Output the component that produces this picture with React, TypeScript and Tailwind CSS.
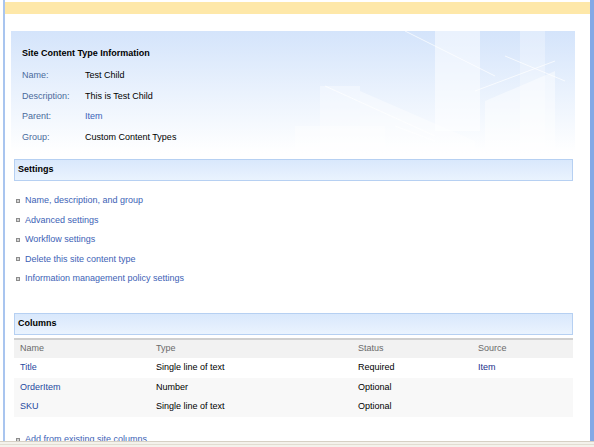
import React from 'react';

const font = { fontFamily: '"Liberation Sans", Arial, sans-serif' };

const info = [
  { label: 'Name:', value: 'Test Child' },
  { label: 'Description:', value: 'This is Test Child' },
  { label: 'Parent:', value: 'Item', link: true },
  { label: 'Group:', value: 'Custom Content Types' },
];

const settings = [
  'Name, description, and group',
  'Advanced settings',
  'Workflow settings',
  'Delete this site content type',
  'Information management policy settings',
];

const columns = [
  { name: 'Title', type: 'Single line of text', status: 'Required', source: 'Item', bg: 'bg-white' },
  { name: 'OrderItem', type: 'Number', status: 'Optional', source: '', bg: 'bg-[#f8f8f8]' },
  { name: 'SKU', type: 'Single line of text', status: 'Optional', source: '', bg: 'bg-[#f8f8f8]' },
];

function Bullet() {
  return <span className="inline-block w-[4px] h-[4px] border border-[#8c8c8c] bg-[#d4d4d4] mr-[5px] shrink-0" />;
}

function SectionBar({ title }: { title: string }) {
  return (
    <div className="ml-[9px] w-[559px] h-[22px] border border-[#b6d0f2] bg-gradient-to-b from-[#d9e8fc] to-[#eaf3fe] flex items-center pl-[3px]">
      <span className="text-[9px] font-bold text-black">{title}</span>
    </div>
  );
}

function Buildings() {
  return (
    <svg className="absolute right-0 top-0" width="300" height="120" viewBox="0 0 300 120">
      <g fill="#ffffff" fillOpacity="0.35">
        <rect x="45" y="55" width="40" height="65" />
        <rect x="160" y="0" width="45" height="100" fillOpacity="0.5" />
        <rect x="245" y="0" width="25" height="120" fillOpacity="0.3" />
        <polygon points="85,60 200,110 200,120 85,120" fillOpacity="0.4" />
        <polygon points="210,70 280,40 280,120 210,120" fillOpacity="0.45" />
        <rect x="20" y="95" width="90" height="25" fillOpacity="0.4" />
      </g>
      <g stroke="#ffffff" strokeOpacity="0.7" strokeWidth="1">
        <line x1="130" y1="0" x2="220" y2="45" />
        <line x1="50" y1="55" x2="160" y2="105" />
        <line x1="200" y1="60" x2="280" y2="30" />
        <line x1="230" y1="25" x2="290" y2="50" />
        <line x1="120" y1="95" x2="160" y2="110" />
      </g>
    </svg>
  );
}

export default function App() {
  return (
    <div className="w-[594px] h-[447px] bg-white overflow-hidden flex flex-col" style={font}>
      <div className="flex flex-1 min-h-0">
        <div className="w-[3px] bg-white" />
        <div className="w-[2px] bg-[#a9c5ef]" />
        <div className="flex-1 flex flex-col min-w-0 overflow-hidden [&>*]:shrink-0">
          <div className="mt-[2px] h-[12px] bg-[#fee8a9]" />

          <div className="relative mt-[17px] ml-[6px] w-[564px] h-[122px] bg-gradient-to-b from-[#d4e4fb] via-[#eaf2fd] to-white">
            <Buildings />
            <div className="relative pt-[16px] pl-[11px]">
              <div className="text-[9px] font-bold text-black leading-[12px]">Site Content Type Information</div>
              <div className="mt-[7px] flex flex-col">
                {info.map((r) => (
                  <div key={r.label} className="flex h-[20.4px] items-center text-[9px]">
                    <span className="w-[63px] text-[#4a6a9c]">{r.label}</span>
                    <span className={r.link ? 'text-[#3a62b8]' : 'text-black'}>{r.value}</span>
                  </div>
                ))}
              </div>
            </div>
          </div>

          <div className="mt-[6px]">
            <SectionBar title="Settings" />
          </div>

          <div className="mt-[10px] ml-[11px] flex flex-col">
            {settings.map((s) => (
                <div key={s} className="flex items-center h-[19.5px] text-[9px] text-[#3d62b6]">
                  <Bullet />
                  <span>{s}</span>
                </div>
            ))}
          </div>

          <div className="mt-[24.5px]">
            <SectionBar title="Columns" />
          </div>

          <div className="mt-[3px] ml-[9px] w-[559px] text-[9px]">
            <div className="flex h-[20px] items-center bg-[#f2f2f2] border-t-2 border-[#cfcfcf] text-[#6a6a6a]">
              <span className="w-[142px] pl-[6px]">Name</span>
              <span className="w-[202px]">Type</span>
              <span className="w-[120px]">Status</span>
              <span>Source</span>
            </div>
            {columns.map((c) => (
              <div key={c.name} className={`flex h-[19.6px] items-center ${c.bg}`}>
                <span className="w-[142px] pl-[6px] text-[#1f4aa0]">{c.name}</span>
                <span className="w-[202px] text-black">{c.type}</span>
                <span className="w-[120px] text-black">{c.status}</span>
                <span className="text-[#1b2f8c]">{c.source}</span>
              </div>
            ))}
          </div>

          <div className="mt-[16px] ml-[11px] flex items-center text-[9px] text-[#3d62b6]">
            <Bullet />
            <span>Add from existing site columns</span>
          </div>
        </div>
        <div className="w-[4px] bg-[#84a9e6]" />
      </div>
      <div className="h-[6px] shrink-0 bg-[#f4f2ec] border-t border-[#d6d0c4] flex flex-col">
        <div className="mt-[2px] h-[1px] bg-[#e2ddd2]" />
      </div>
    </div>
  );
}
